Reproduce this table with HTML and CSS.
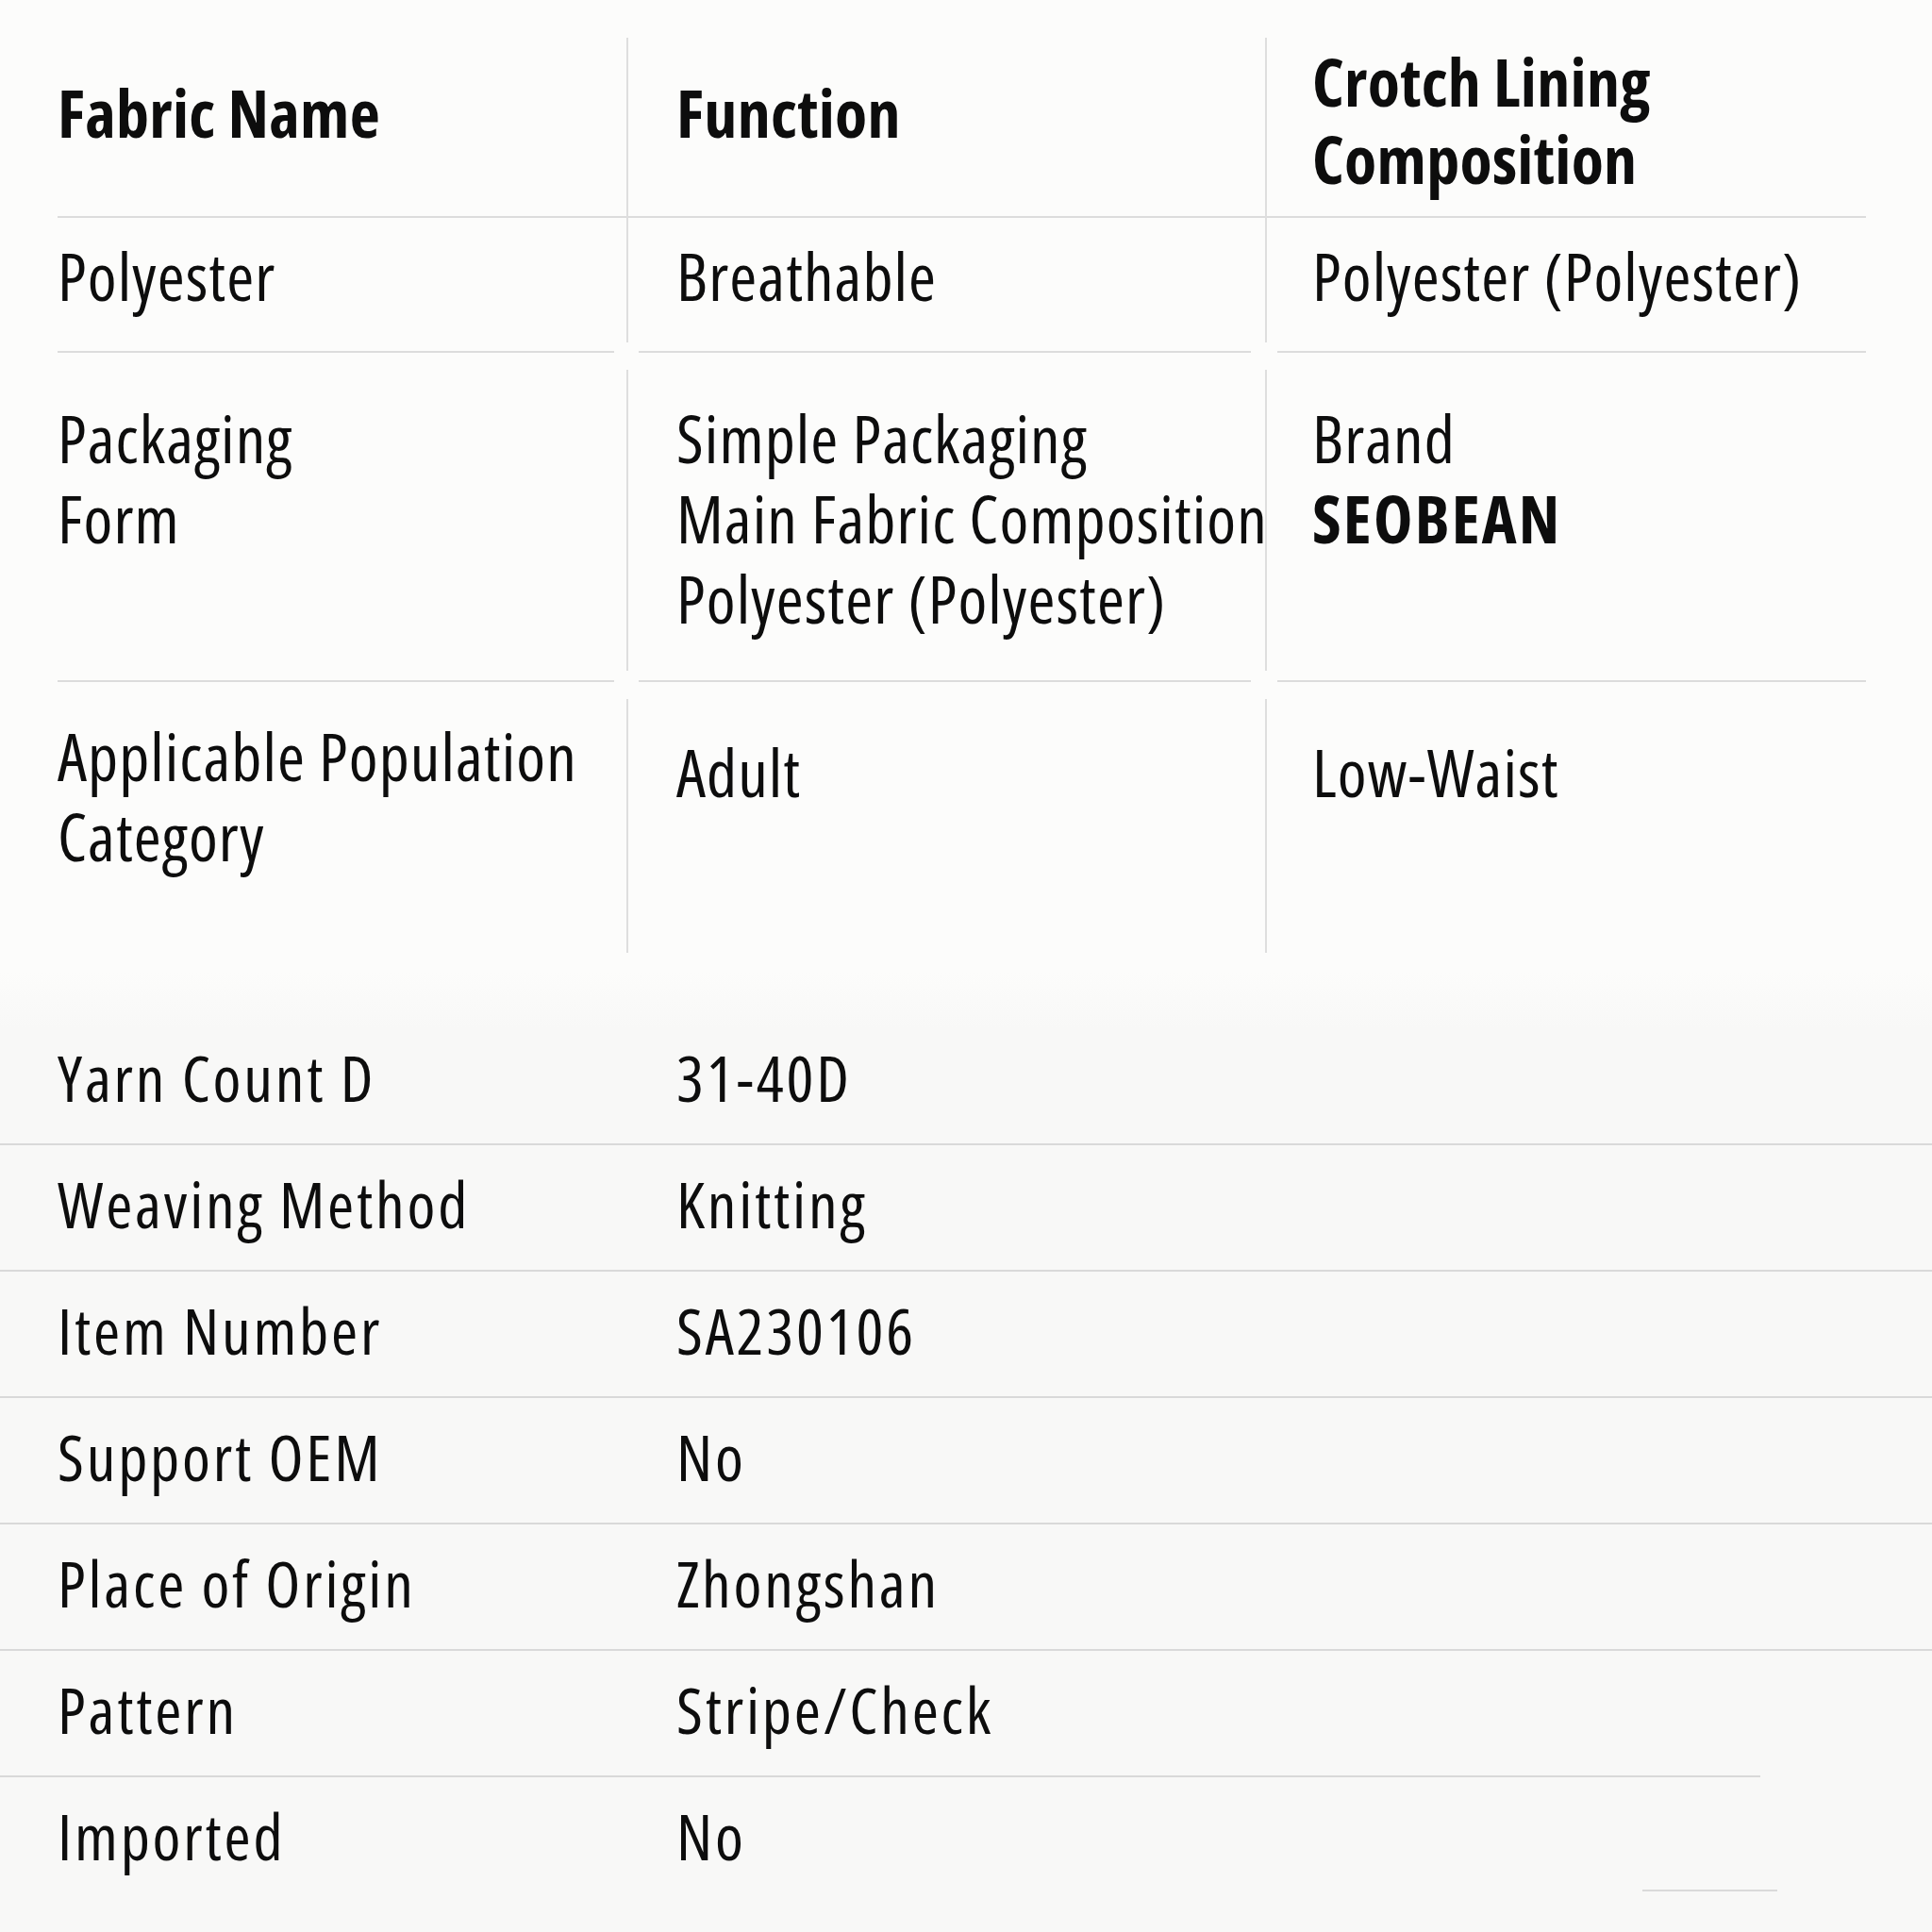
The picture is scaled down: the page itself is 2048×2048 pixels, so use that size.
FILE: index.html
```html
<!DOCTYPE html>
<html lang="en">
<head>
<meta charset="utf-8">
<title>Product Specifications</title>
<link rel="stylesheet" href="styles.css">
</head>
<body>
<div class="page">
  <section class="spec-grid">
    <div class="cell head c1">Fabric Name</div>
    <div class="cell head c2">Function</div>
    <div class="cell head c3 two-line">Crotch Lining<br>Composition</div>

    <div class="cell r2 c1">Polyester</div>
    <div class="cell r2 c2">Breathable</div>
    <div class="cell r2 c3">Polyester (Polyester)</div>

    <div class="cell r3 c1">Packaging<br>Form</div>
    <div class="cell r3 c2">Simple Packaging<br>Main Fabric Composition<br>Polyester (Polyester)</div>
    <div class="cell r3 c3">Brand<br><strong class="brand">SEOBEAN</strong></div>

    <div class="cell r4 c1">Applicable Population<br>Category</div>
    <div class="cell r4 c2 low">Adult</div>
    <div class="cell r4 c3 low">Low-Waist</div>
  </section>

  <section class="spec-list">
    <div class="row"><span class="label">Yarn Count D</span><span class="value">31-40D</span></div>
    <div class="row"><span class="label">Weaving Method</span><span class="value">Knitting</span></div>
    <div class="row"><span class="label">Item Number</span><span class="value">SA230106</span></div>
    <div class="row"><span class="label">Support OEM</span><span class="value">No</span></div>
    <div class="row"><span class="label">Place of Origin</span><span class="value">Zhongshan</span></div>
    <div class="row short-line"><span class="label">Pattern</span><span class="value">Stripe/Check</span></div>
    <div class="row last"><span class="label">Imported</span><span class="value">No</span></div>
  </section>
</div>
</body>
</html>
```

FILE: styles.css
```css
html, body {
  margin: 0;
  padding: 0;
}

body {
  width: 2048px;
  height: 2048px;
  overflow: hidden;
  background: #fcfcfb;
  color: #0d0d0d;
  font-family: "Open Sans", "Liberation Sans", sans-serif;
  font-stretch: 75%;
}

.page {
  display: flex;
  flex-direction: column;
  height: 2048px;
}

/* ---------- top 3-column grid ---------- */
.spec-grid {
  display: grid;
  grid-template-columns: 603px 677px 637px;
  margin: 40px 0 0 61px;
  width: 1917px;
  font-size: 70px;
  line-height: 85px;
  letter-spacing: 1.1px;
}

.cell {
  position: relative;
  box-sizing: border-box;
  white-space: nowrap;
}

.c2 { padding-left: 53px; }
.c3 { padding-left: 50px; }

/* vertical dividers */
.c2::before,
.c3::before {
  content: "";
  position: absolute;
  left: 0;
  top: 0;
  bottom: 0;
  width: 2px;
  background: #dedede;
}

/* header row */
.head {
  font-weight: 700;
  letter-spacing: 0.3px;
  line-height: 82px;
  height: 191px;
  padding-top: 38px;
  border-bottom: 2px solid #dcdcdc;
}
.head.two-line { padding-top: 5px; }
.head.c2::before, .head.c3::before { bottom: -2px; }

/* row 2 */
.r2 {
  height: 143px;
  padding-top: 19px;
}
.r2::after, .r3::after {
  content: "";
  position: absolute;
  bottom: 0;
  height: 2px;
  background: #dcdcdc;
}
.r2.c1::after, .r3.c1::after { left: 0; right: 13px; }
.r2.c2::after, .r3.c2::after { left: 13px; right: 15px; }
.r2.c3::after, .r3.c3::after { left: 13px; right: 0; }
.r2.c2::before, .r2.c3::before { bottom: 11px; }

/* row 3 */
.r3 {
  height: 349px;
  padding-top: 48px;
}
.r3.c2::before, .r3.c3::before { top: 18px; bottom: 12px; }
.brand {
  font-weight: 700;
  letter-spacing: 2.2px;
}

/* row 4 */
.r4 {
  height: 287px;
  padding-top: 36px;
}
.r4.low { padding-top: 53px; }
.r4.c2::before, .r4.c3::before { top: 18px; }

/* ---------- bottom list ---------- */
.spec-list {
  flex: 1;
  margin-top: 20px;
  padding-top: 50px;
  background: linear-gradient(#fcfcfb 0, #f8f8f7 60px, #f8f8f7 100%);
  font-size: 68px;
  letter-spacing: 2.8px;
  line-height: 85px;
}

.row {
  position: relative;
  display: grid;
  grid-template-columns: 656px 1fr;
  height: 134px;
  box-sizing: border-box;
  padding: 19px 0 0 61px;
  border-bottom: 2px solid #d9d9d9;
  white-space: nowrap;
}

.row.short-line { border-bottom: none; }
.row.short-line::after {
  content: "";
  position: absolute;
  left: 0;
  bottom: 0;
  width: 1866px;
  height: 2px;
  background: #d9d9d9;
}

.row.last { border-bottom: none; }
.row.last::after {
  content: "";
  position: absolute;
  left: 1741px;
  top: 119px;
  width: 143px;
  height: 2px;
  background: #dadada;
}
```
